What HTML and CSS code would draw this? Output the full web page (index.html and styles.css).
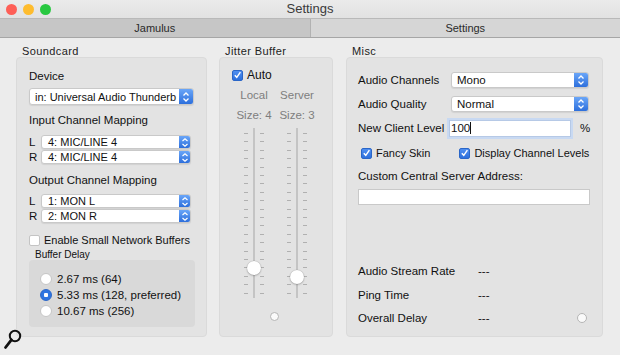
FILE: index.html
```html
<!doctype html>
<html>

<head>
    <title>Settings</title>
    <meta charset="utf-8">
    <link rel="stylesheet" href="styles.css">
</head>

<body>
    <div class="window">
        <div class="titlebar">
            <div class="lights">
                <span class="light red"></span>
                <span class="light yellow"></span>
                <span class="light green"></span>
            </div>
            <div class="title">Settings</div>
        </div>
        <div class="tabs">
            <div class="tab tab-dark">Jamulus</div>
            <div class="tab tab-light">Settings</div>
        </div>

        <div class="content">
            <!-- Soundcard -->
            <section class="group group-sound">
                <div class="group-title">Soundcard</div>
                <div class="box box-sound">
                    <div class="label">Device</div>
                    <div class="select select-device">
                        <span class="select-text">in: Universal Audio Thunderb</span>
                        <span class="stepper"><svg width="8" height="12" viewBox="0 0 8 12"><path d="M1.5 4.5 L4 2 L6.5 4.5 M1.5 7.5 L4 10 L6.5 7.5" fill="none" stroke="#fff" stroke-width="1.3"/></svg></span>
                    </div>

                    <div class="label label-map">Input Channel Mapping</div>
                    <div class="map-row map-first">
                        <span class="lr">L</span>
                        <div class="select select-small">
                            <span class="select-text">4: MIC/LINE 4</span>
                            <span class="stepper"><svg width="8" height="11" viewBox="0 0 8 11"><path d="M1.5 4 L4 1.8 L6.5 4 M1.5 7 L4 9.2 L6.5 7" fill="none" stroke="#fff" stroke-width="1.2"/></svg></span>
                        </div>
                    </div>
                    <div class="map-row">
                        <span class="lr">R</span>
                        <div class="select select-small">
                            <span class="select-text">4: MIC/LINE 4</span>
                            <span class="stepper"><svg width="8" height="11" viewBox="0 0 8 11"><path d="M1.5 4 L4 1.8 L6.5 4 M1.5 7 L4 9.2 L6.5 7" fill="none" stroke="#fff" stroke-width="1.2"/></svg></span>
                        </div>
                    </div>

                    <div class="label label-out">Output Channel Mapping</div>
                    <div class="map-row map-first-out">
                        <span class="lr">L</span>
                        <div class="select select-small">
                            <span class="select-text">1: MON L</span>
                            <span class="stepper"><svg width="8" height="11" viewBox="0 0 8 11"><path d="M1.5 4 L4 1.8 L6.5 4 M1.5 7 L4 9.2 L6.5 7" fill="none" stroke="#fff" stroke-width="1.2"/></svg></span>
                        </div>
                    </div>
                    <div class="map-row">
                        <span class="lr">R</span>
                        <div class="select select-small">
                            <span class="select-text">2: MON R</span>
                            <span class="stepper"><svg width="8" height="11" viewBox="0 0 8 11"><path d="M1.5 4 L4 1.8 L6.5 4 M1.5 7 L4 9.2 L6.5 7" fill="none" stroke="#fff" stroke-width="1.2"/></svg></span>
                        </div>
                    </div>

                    <div class="check-row check-small">
                        <span class="checkbox"></span>
                        <span>Enable Small Network Buffers</span>
                    </div>
                    <div class="sub-title">Buffer Delay</div>
                    <div class="inner-box">
                        <div class="radio-row"><span class="radio"></span>2.67 ms (64)</div>
                        <div class="radio-row"><span class="radio radio-on"></span>5.33 ms (128, preferred)</div>
                        <div class="radio-row"><span class="radio"></span>10.67 ms (256)</div>
                    </div>
                </div>
            </section>

            <!-- Jitter Buffer -->
            <section class="group group-jitter">
                <div class="group-title">Jitter Buffer</div>
                <div class="box box-jitter">
                    <div class="check-row check-auto">
                        <span class="checkbox checkbox-on"><svg width="10" height="10" viewBox="0 0 10 10"><path d="M2 5.2 L4.2 7.6 L8.2 1.8" fill="none" stroke="#fff" stroke-width="1.6"/></svg></span>
                        <span class="auto-text">Auto</span>
                    </div>
                    <div class="jit-cols">
                        <div class="jit-col">
                            <div class="jit-head">Local</div>
                            <div class="jit-size">Size: 4</div>
                            <div class="slider">
                                <span class="ticks ticks-left"></span>
                                <span class="track"></span>
                                <span class="ticks ticks-right"></span>
                                <span class="thumb thumb-local"></span>
                            </div>
                        </div>
                        <div class="jit-col">
                            <div class="jit-head">Server</div>
                            <div class="jit-size">Size: 3</div>
                            <div class="slider">
                                <span class="ticks ticks-left"></span>
                                <span class="track"></span>
                                <span class="ticks ticks-right"></span>
                                <span class="thumb thumb-server"></span>
                            </div>
                        </div>
                    </div>
                    <div class="led-row"><span class="led"></span></div>
                </div>
            </section>

            <!-- Misc -->
            <section class="group group-misc">
                <div class="group-title">Misc</div>
                <div class="box box-misc">
                    <div class="form-row">
                        <span class="form-label">Audio Channels</span>
                        <div class="select select-misc">
                            <span class="select-text">Mono</span>
                            <span class="stepper"><svg width="8" height="12" viewBox="0 0 8 12"><path d="M1.5 4.5 L4 2 L6.5 4.5 M1.5 7.5 L4 10 L6.5 7.5" fill="none" stroke="#fff" stroke-width="1.3"/></svg></span>
                        </div>
                    </div>
                    <div class="form-row">
                        <span class="form-label">Audio Quality</span>
                        <div class="select select-misc">
                            <span class="select-text">Normal</span>
                            <span class="stepper"><svg width="8" height="12" viewBox="0 0 8 12"><path d="M1.5 4.5 L4 2 L6.5 4.5 M1.5 7.5 L4 10 L6.5 7.5" fill="none" stroke="#fff" stroke-width="1.3"/></svg></span>
                        </div>
                    </div>
                    <div class="form-row">
                        <span class="form-label">New Client Level</span>
                        <div class="text-input level-input">100<span class="caret"></span></div>
                        <span class="percent">%</span>
                    </div>
                    <div class="check-pair">
                        <div class="check-row">
                            <span class="checkbox checkbox-on"><svg width="10" height="10" viewBox="0 0 10 10"><path d="M2 5.2 L4.2 7.6 L8.2 1.8" fill="none" stroke="#fff" stroke-width="1.6"/></svg></span>
                            <span>Fancy Skin</span>
                        </div>
                        <div class="check-row">
                            <span class="checkbox checkbox-on"><svg width="10" height="10" viewBox="0 0 10 10"><path d="M2 5.2 L4.2 7.6 L8.2 1.8" fill="none" stroke="#fff" stroke-width="1.6"/></svg></span>
                            <span>Display Channel Levels</span>
                        </div>
                    </div>
                    <div class="label label-server">Custom Central Server Address:</div>
                    <div class="text-input server-input"></div>

                    <div class="stats">
                        <div class="stat-row"><span class="stat-label">Audio Stream Rate</span><span>---</span></div>
                        <div class="stat-row"><span class="stat-label">Ping Time</span><span>---</span></div>
                        <div class="stat-row"><span class="stat-label">Overall Delay</span><span>---</span><span class="led led-misc"></span></div>
                    </div>
                </div>
            </section>
        </div>

        <svg class="magnifier" width="20" height="24" viewBox="0 0 20 24">
            <circle cx="12" cy="8" r="5.2" fill="none" stroke="#111" stroke-width="2"/>
            <path d="M8.4 11.8 L2.5 19.5" stroke="#111" stroke-width="2.8" stroke-linecap="round"/>
        </svg>
    </div>
</body>

</html>
```

FILE: styles.css
```css
body {
    margin: 0;
    font-family: "Liberation Sans", Arial, Helvetica, sans-serif;
    color: #111;
}

.window {
    position: relative;
    width: 620px;
    height: 355px;
    background-color: #ececec;
    overflow: hidden;
}

/* title bar */
.titlebar {
    position: relative;
    height: 18px;
    background: linear-gradient(#ebebeb, #e2e2e2);
}
.lights {
    position: absolute;
    left: 6px;
    top: 4px;
    display: flex;
    gap: 6px;
}
.light {
    width: 11px;
    height: 11px;
    border-radius: 50%;
}
.red { background-color: #fe5f57; }
.yellow { background-color: #febc2e; }
.green { background-color: #28c840; }
.title {
    text-align: center;
    font-size: 13px;
    line-height: 18px;
    color: #3a3a3a;
}

/* tabs */
.tabs {
    display: flex;
    height: 18px;
    border-top: 1px solid #b9b9b9;
    border-bottom: 1px solid #a6a6a6;
}
.tab {
    flex: 1;
    text-align: center;
    font-size: 11px;
    line-height: 18px;
    color: #2a2a2a;
}
.tab-dark {
    background-color: #c6c6c6;
    border-right: 1px solid #b2b2b2;
}
.tab-light {
    background-color: #d6d6d6;
}

/* content */
.content {
    display: flex;
    gap: 12px;
    padding: 7px 17px 0 16px;
}
.group-title {
    font-size: 11px;
    letter-spacing: 0.4px;
    line-height: 12px;
    padding-left: 6px;
    color: #222;
}
.box {
    height: 280px;
    box-sizing: border-box;
    background-color: #e3e3e3;
    border: 1px solid #dadada;
    border-radius: 4px;
    font-size: 11.5px;
}
.group-sound { width: 191px; }
.group-jitter { width: 114px; }
.group-misc { width: 257px; margin-left: 1px; }

.label {
    line-height: 14px;
}

/* selects */
.select {
    display: flex;
    align-items: center;
    background-color: #fff;
    border: 1px solid #c9c9c9;
    border-radius: 3px;
    box-shadow: 0 1px 1px rgba(0, 0, 0, 0.08);
    box-sizing: border-box;
    overflow: hidden;
}
.select-text {
    flex: 1;
    white-space: nowrap;
    overflow: hidden;
    padding-left: 5px;
    font-size: 11px;
}
.stepper {
    display: flex;
    align-items: center;
    justify-content: center;
    align-self: stretch;
    width: 14px;
    background: linear-gradient(#6aa6f8, #2d6fdc);
}
.select-device {
    width: 165px;
    height: 17px;
    margin-top: 5px;
}
.select-small {
    width: 150px;
    height: 14px;
}
.select-small .stepper { width: 11px; }
.select-small .select-text { padding-left: 6px; }

/* soundcard */
.box-sound {
    padding: 11px 0 0 12px;
}
.label-map { margin-top: 8px; }
.label-out { margin-top: 9px; }
.map-row {
    display: flex;
    align-items: center;
    margin-top: 1px;
}
.map-first { margin-top: 8px; }
.map-first-out { margin-top: 7px; }
.lr {
    width: 12px;
    line-height: 14px;
}

.check-row {
    display: flex;
    align-items: center;
    gap: 4px;
    line-height: 14px;
    white-space: nowrap;
}
.check-small {
    margin-top: 10px;
    font-size: 11px;
}
.checkbox {
    display: flex;
    align-items: center;
    justify-content: center;
    width: 11px;
    height: 11px;
    box-sizing: border-box;
    background-color: #fff;
    border: 1px solid #c4c4c4;
    border-radius: 2px;
}
.checkbox-on {
    background: linear-gradient(#4f8ff0, #2d6fdc);
    border-color: #2a66c8;
}
.sub-title {
    font-size: 10px;
    line-height: 11px;
    margin-top: 2px;
    padding-left: 6px;
}
.inner-box {
    width: 166px;
    height: 67px;
    box-sizing: border-box;
    background-color: #d9d9d9;
    border-radius: 4px;
    padding: 11px 0 0 11px;
}
.radio-row {
    display: flex;
    align-items: center;
    gap: 5px;
    height: 16px;
    font-size: 11.5px;
}
.radio {
    width: 12px;
    height: 12px;
    box-sizing: border-box;
    border-radius: 50%;
    background-color: #fff;
    border: 1px solid #c6c6c6;
}
.radio-on {
    background: radial-gradient(circle, #fff 0 2px, #2f74e0 2.5px);
    border-color: #2a66c8;
}

/* jitter buffer */
.box-jitter {
    padding: 10px 0 0 12px;
}
.check-auto {
    font-size: 12px;
}
.jit-cols {
    display: flex;
    gap: 3px;
    margin-left: 2px;
    margin-top: 6px;
}
.jit-col {
    width: 40px;
    display: flex;
    flex-direction: column;
    align-items: center;
}
.jit-head,
.jit-size {
    line-height: 14px;
    color: #7e7e7e;
    font-size: 11.5px;
    white-space: nowrap;
}
.jit-size { margin-top: 6px; }
.slider {
    position: relative;
    width: 40px;
    height: 170px;
    margin-top: 6px;
}
.track {
    position: absolute;
    left: 19px;
    top: 0;
    width: 2px;
    height: 170px;
    background-color: #c4c4c4;
}
.ticks {
    position: absolute;
    top: 5px;
    width: 4px;
    height: 161px;
    background: repeating-linear-gradient(to bottom, #b0b0b0 0 1px, transparent 1px 8.4px);
}
.ticks-left { left: 10px; }
.ticks-right { left: 26px; }
.thumb {
    position: absolute;
    left: 13px;
    width: 14px;
    height: 14px;
    border-radius: 50%;
    background-color: #fff;
    box-shadow: 0 0 1px rgba(0, 0, 0, 0.35), 0 1px 2px rgba(0, 0, 0, 0.2);
}
.thumb-local { top: 133px; }
.thumb-server { top: 142px; }
.led-row {
    display: flex;
    margin-top: 14px;
    padding-left: 38px;
}
.led {
    width: 9px;
    height: 9px;
    box-sizing: border-box;
    border-radius: 50%;
    background: #fafafa;
    border: 1px solid #b5b5b5;
}

/* misc */
.box-misc {
    display: flex;
    flex-direction: column;
    padding: 14px 0 0 11px;
}
.form-row {
    display: flex;
    align-items: center;
    height: 16px;
    margin-bottom: 8px;
}
.form-label {
    width: 93px;
    white-space: nowrap;
}
.select-misc {
    width: 138px;
    height: 16px;
}
.select-misc .select-text { font-size: 11.5px; }
.text-input {
    background-color: #fff;
    border: 1px solid #c9c9c9;
    box-sizing: border-box;
}
.level-input {
    width: 122px;
    height: 17px;
    margin-left: -2px;
    line-height: 15px;
    padding-left: 1px;
    font-size: 11.5px;
    border-color: #b6c9e6;
    box-shadow: 0 0 0 2px #c8d9f2;
}
.caret {
    display: inline-block;
    width: 1px;
    height: 12px;
    vertical-align: -2px;
    background-color: #111;
}
.percent {
    margin-left: 9px;
}
.check-pair {
    display: flex;
    gap: 29px;
    padding-left: 3px;
    margin-top: 2px;
    font-size: 11px;
}
.label-server {
    margin-top: 9px;
}
.server-input {
    width: 232px;
    height: 16px;
    margin-top: 6px;
}
.stats {
    margin-top: auto;
    padding-bottom: 11px;
}
.stat-row {
    display: flex;
    align-items: center;
    line-height: 14px;
    margin-top: 9.5px;
}
.stat-label {
    width: 120px;
}
.led-misc {
    width: 10px;
    height: 10px;
    margin-left: 87px;
}

.magnifier {
    position: absolute;
    left: 3px;
    top: 328px;
}
```
